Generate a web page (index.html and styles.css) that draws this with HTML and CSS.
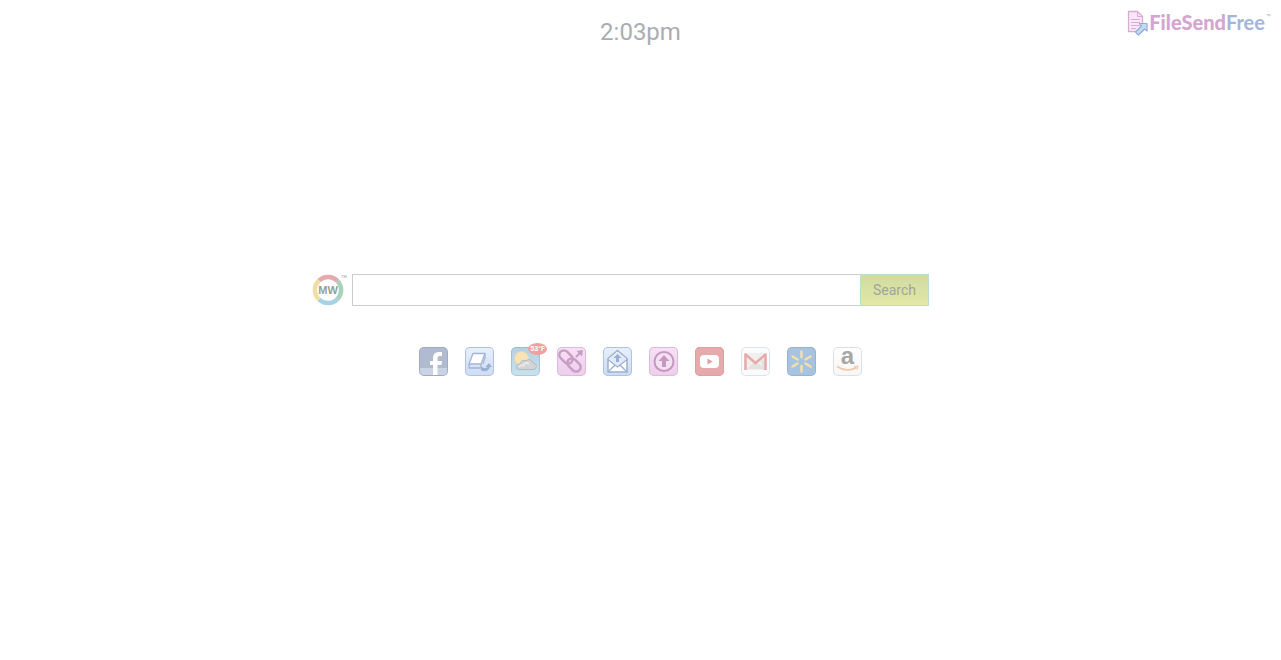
FILE: index.html
```html
<!DOCTYPE html>
<html lang="en">
<head>
  <meta charset="UTF-8" />
  <meta name="viewport" content="width=device-width, initial-scale=1.0"/>
  <title>FileSendFree</title>
  <link rel="stylesheet" href="styles.css">
</head>
<body>

  <header class="top-bar">
    <time class="clock">2:03pm</time>
    <a href="#" class="brand">
      <svg class="brand-icon" viewBox="0 0 21 26" aria-hidden="true">
        <path d="M1.5 1.5H10.500L15.5 6.500V21.5H1.5Z" fill="#f8e8f6" stroke="#d9acd6" stroke-width="1.300" stroke-linejoin="round"/>
        <path d="M10.500 1.500V6.500H15.500M4 9.500H13M4 12.500H13M4 15.500H13M4 18.500H9" fill="none" stroke="#d9acd6"/>
        <path d="M12.500 13.500H20V21L17.500 19L11.500 25L8.500 22L14.500 16Z" fill="#c6daf4" stroke="#91acd8" stroke-width="1.200" stroke-linejoin="round"/>
      </svg>
      <span class="brand-name"><b>FileSend</b><span class="free">Free</span></span><span class="brand-tm">™</span>
    </a>
  </header>

  <main>
    <form class="search-row" onsubmit="return false">
      <a href="#" class="mw-logo" aria-label="MyWay">
        <svg viewBox="0 0 36 32" aria-hidden="true">
          <g fill="none" stroke-width="4.500">
            <path d="M7 6.500A13 13 0 0 1 25.500 7" stroke="#e6a9b0"/>
            <path d="M25.500 7A13 13 0 0 1 25.500 25" stroke="#a8d3b6"/>
            <path d="M25.500 25A13 13 0 0 1 7 25.500" stroke="#a9d1e6"/>
            <path d="M7 25.500A13 13 0 0 1 7 6.500" stroke="#f0dfa3"/>
          </g>
          <text x="16" y="20" class="mw-text">MW</text>
          <text x="32" y="4" class="mw-tm">TM</text>
        </svg>
      </a>
      <input type="text" class="search-input" aria-label="Search the web">
      <button type="submit" class="search-button">Search</button>
    </form>

    <nav class="shortcuts">
      <a href="#" class="tile facebook" aria-label="Facebook">
        <svg viewBox="0 0 29 29" aria-hidden="true">
          <path d="M1 21H28V24Q28 28 24 28H5Q1 28 1 24Z" fill="#c9d3e3"/>
          <path d="M14 28V18H11V14H14V11Q14 5 20 5H23V9H20.500Q18.500 9 18.500 11V14H23L22.500 18H18.500V28Z" fill="#fff"/>
        </svg>
      </a>
      <a href="#" class="tile blue" aria-label="Send files">
        <svg viewBox="0 0 29 29" aria-hidden="true">
          <path d="M8 6.500H20L16 17H4Z" fill="#fff" stroke="#a5b4d3" stroke-width="1.300" stroke-linejoin="round"/>
          <path d="M4 17V21H16M16 17V21M20 6.500V11L18 17" fill="none" stroke="#a5b4d3" stroke-width="1.300" stroke-linejoin="round"/>
          <path d="M16 20Q21 22 22.500 20H20.500L24 16L27 20H25Q23 26 16 23.500Z" fill="#9bafd3"/>
        </svg>
      </a>
      <a href="#" class="tile weather" aria-label="Weather">
        <svg viewBox="0 0 29 29" aria-hidden="true">
          <circle cx="10.500" cy="11.500" r="7" fill="#f7e3b5" stroke="#ead9ae"/>
          <path d="M8 22.500Q5 22 5.500 19Q6.500 16.500 9 17Q10 12.500 15 13.500Q20 11 22 16Q25.500 16 25.500 19.500Q25 22.500 22 22.500Z" fill="#d3d4d4" stroke="#b3bbbf" stroke-width="1"/>
          <path d="M8 20Q10 17 12 19Q14 14 18 17" fill="none" stroke="#ebebeb" stroke-width="1.500"/>
        </svg>
        <span class="badge">53°F</span>
      </a>
      <a href="#" class="tile pink" aria-label="Share a link">
        <svg viewBox="0 0 29 29" aria-hidden="true">
          <g fill="none" stroke="#c89cc5" stroke-width="2.500">
            <rect x="1.500" y="5.500" width="15" height="9" rx="4.500" transform="rotate(45 9 10)"/>
            <rect x="9.500" y="13.500" width="15" height="9" rx="4.500" transform="rotate(45 17 18)"/>
            <path d="M19 10L23 6" stroke-width="2"/>
          </g>
          <path d="M19.500 4L26 3L25 9.500Z" fill="#c89cc5"/>
        </svg>
      </a>
      <a href="#" class="tile blue" aria-label="Email">
        <svg viewBox="0 0 29 29" aria-hidden="true">
          <path d="M5 11.500L14.500 3.500L24 11.500V25H5Z" fill="#fff" stroke="#9daed1" stroke-width="1.500"/>
          <path d="M6 12L14.500 5L23 12L14.500 19Z" fill="#e1eaf8"/>
          <path d="M5 12.500L14.500 20L24 12.500M5 25L12 18M24 25L17 18" fill="none" stroke="#9daed1" stroke-width="1.300"/>
          <path d="M14.500 7L18.500 11H16V15H13V11H10.500Z" fill="#9daed1"/>
        </svg>
      </a>
      <a href="#" class="tile pink" aria-label="Upload">
        <svg viewBox="0 0 29 29" aria-hidden="true">
          <circle cx="15" cy="14.500" r="9.500" fill="#f5e0f3" stroke="#c697c0" stroke-width="2"/>
          <path d="M15 8L20.500 14H17V20H13V14H9.500Z" fill="#c697c0"/>
        </svg>
      </a>
      <a href="#" class="tile youtube" aria-label="YouTube">
        <svg viewBox="0 0 29 29" aria-hidden="true">
          <rect x="5" y="8" width="19" height="13" rx="4" fill="#fff"/>
          <path d="M12.500 11.500L17.500 14.500L12.500 17.500Z" fill="#dd9da1"/>
        </svg>
      </a>
      <a href="#" class="tile gmail" aria-label="Gmail">
        <svg viewBox="0 0 29 29" aria-hidden="true">
          <path d="M3 6H26V23H3Z" fill="#f0efed"/>
          <path d="M6 22L14.500 14L24 22M20 11L26 18V23H22Z" fill="#e2e2de"/>
          <path d="M4.500 23V7.500L14.500 16L24.500 7.500V23" fill="none" stroke="#e7aaa9" stroke-width="2.500" stroke-linejoin="round"/>
        </svg>
      </a>
      <a href="#" class="tile walmart" aria-label="Walmart">
        <svg viewBox="0 0 29 29" aria-hidden="true">
          <path d="M14.500 4.500V10M14.500 19V24.500M5.500 9.500L10.500 12.500M18.500 16.500L23.500 19.500M23.500 9.500L18.500 12.500M10.500 16.500L5.500 19.500" stroke="#f4dfaa" stroke-width="2.500" stroke-linecap="round"/>
        </svg>
      </a>
      <a href="#" class="tile amazon" aria-label="Amazon">
        <svg viewBox="0 0 29 29" aria-hidden="true">
          <text x="14.500" y="17" class="amazon-text">a</text>
          <path d="M4 19.500Q14 26 23.500 20.500" fill="none" stroke="#f0c6a4" stroke-width="1.500"/>
          <path d="M21 19.500L25 19L24 22.500" fill="none" stroke="#f0c6a4"/>
        </svg>
      </a>
    </nav>
  </main>

</body>
</html>
```
FILE: styles.css
```css
* {
  box-sizing: border-box;
}

body {
  margin: 0;
  background-color: #fff;
  color: #a9adb3;
  font-family: "Roboto", "Noto Sans", sans-serif;
}

a {
  color: inherit;
  text-decoration: none;
}

svg {
  display: block;
  overflow: visible;
}

/* Clock in the middle, brand on the right */
.top-bar {
  display: grid;
  grid-template-columns: 1fr auto 1fr;
  align-items: start;
  padding: 10px 10px 0;
}

.clock {
  grid-column: 2;
  padding-top: 4px;
  font-size: 24px;
  line-height: 36px;
}

.brand {
  justify-self: end;
  display: flex;
  align-items: flex-start;
  gap: 1px;
}

.brand-icon {
  width: 21px;
  height: 26px;
}

.brand-name {
  font-family: "Lato", "Noto Sans", sans-serif;
  font-size: 20px;
  line-height: 24px;
  font-weight: bold;
  color: #d4a5d0;
}

.brand-name b {
  font-weight: 900;
}

.brand-name .free {
  color: #a3b6da;
}

.brand-tm {
  font-size: 8px;
  line-height: 16px;
  color: #a3b6da;
}

.search-row {
  display: flex;
  align-items: center;
  width: 100%;
  max-width: 657px;
  margin: 224px auto 0;
  padding-right: 40px;
}

.mw-logo {
  flex: none;
  width: 36px;
  margin-right: 4px;
}

.mw-text {
  font: bold 11px "Liberation Sans", sans-serif;
  fill: #9b9b9b;
  text-anchor: middle;
}

.mw-tm {
  font: 4px "Liberation Sans", sans-serif;
  fill: #999;
  text-anchor: middle;
}

.search-input {
  flex: 1;
  min-width: 0;
  height: 32px;
  padding: 0 8px;
  border: 1px solid #ccc;
  border-right: none;
  border-radius: 0;
  font-size: 16px;
  outline: none;
}

.search-button {
  width: 69px;
  height: 32px;
  padding: 0;
  border: 1px solid #b9e0cf;
  background: linear-gradient(#cfdc9f, #e2e8a7);
  color: #a0a49d;
  font-family: inherit;
  font-size: 14px;
  cursor: pointer;
}

.shortcuts {
  display: flex;
  flex-wrap: wrap;
  justify-content: center;
  gap: 17px;
  margin-top: 41px;
}

.tile {
  position: relative;
  width: 29px;
  height: 29px;
  border-radius: 5px;
  box-shadow: inset 0 0 0 1px rgba(120, 140, 180, 0.3);
}

.facebook {
  background-color: #b1bbcf;
}

.blue {
  background: linear-gradient(#e8f0fd, #cbdcf4);
  box-shadow: inset 0 0 0 1px #b1c2df;
}

.weather {
  background: linear-gradient(#b3d0e3, #c8e2ee);
}

.pink {
  background: linear-gradient(#f7e1f5, #edcdeb);
  box-shadow: inset 0 0 0 1px #debada;
}

.youtube {
  background-color: #e6a9ac;
  box-shadow: inset 0 0 0 1px #dc9fa2;
}

.gmail {
  background-color: #fafbfc;
  box-shadow: inset 0 0 0 1px #dde4e9;
}

.walmart {
  background-color: #a6c4e0;
}

.amazon {
  background: linear-gradient(#fff, #f5f6f8);
  box-shadow: inset 0 0 0 1px #dedfe2;
}

.amazon-text {
  font: bold 24px "Liberation Sans", sans-serif;
  fill: #a6a6a6;
  text-anchor: middle;
}

/* Temperature over the weather tile */
.badge {
  position: absolute;
  top: -4px;
  right: -7px;
  width: 19px;
  border-radius: 50%;
  background-color: #f1a0a0;
  color: #fff;
  font-size: 7px;
  font-weight: bold;
  line-height: 12px;
  text-align: center;
}
```
